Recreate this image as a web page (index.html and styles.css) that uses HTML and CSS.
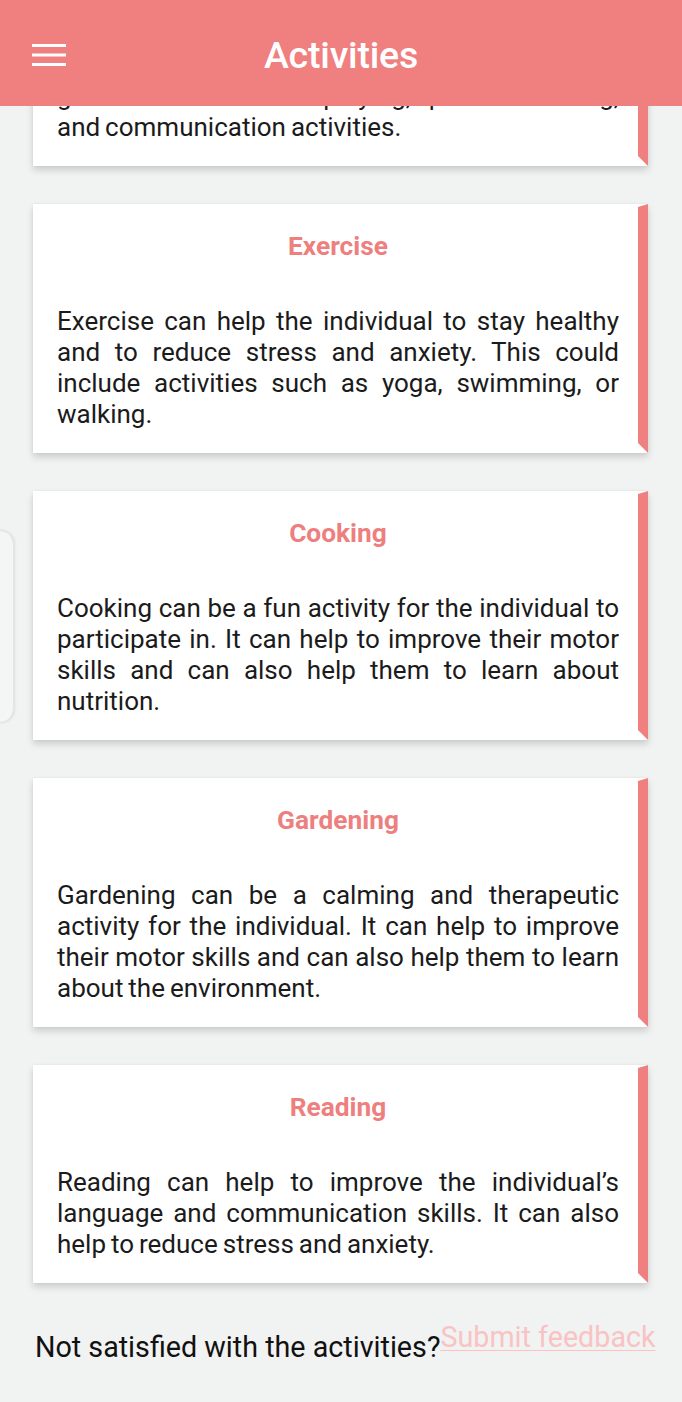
FILE: index.html
```html
<!DOCTYPE html>
<html lang="en">
<head>
<meta charset="utf-8">
<title>Activities</title>
<link rel="stylesheet" href="styles.css">
</head>
<body>
<div class="app">
  <header class="topbar">
    <button class="menu" aria-label="Menu">
      <svg width="34" height="22" viewBox="0 0 34 22"><rect x="0" y="0" width="34" height="3" fill="#fff"/><rect x="0" y="9.5" width="34" height="3" fill="#fff"/><rect x="0" y="19" width="34" height="3" fill="#fff"/></svg>
    </button>
    <h1 class="title">Activities</h1>
  </header>
  <main class="scroll">
    <div class="first-wrap">
      <section class="card">
        <h2 class="card-title">Social Skills</h2>
        <p class="card-text">Social activities can help the individual to build friendships and confidence. This could include<br>games such as <span class="nb">role-playing,</span> <span class="nb">problem-solving,</span> <span class="nb">and communication</span> activities.</p>
      </section>
    </div>
    <section class="card">
      <h2 class="card-title">Exercise</h2>
      <p class="card-text">Exercise can help the individual to stay healthy and to reduce stress and anxiety. This could include activities such as yoga, swimming, or walking.</p>
    </section>
    <section class="card">
      <h2 class="card-title">Cooking</h2>
      <p class="card-text">Cooking can be a fun activity for the individual to participate in. It can help to improve their motor skills and can also help them to learn about nutrition.</p>
    </section>
    <section class="card">
      <h2 class="card-title">Gardening</h2>
      <p class="card-text">Gardening can be a calming and therapeutic activity for the individual. It can help to improve their motor skills and can also help them to learn about the environment.</p>
    </section>
    <section class="card">
      <h2 class="card-title">Reading</h2>
      <p class="card-text">Reading can help to improve the individual’s language and communication skills. It can also help to reduce stress and anxiety.</p>
    </section>
    <div class="feedback">
      <span class="feedback-q">Not satisfied with the activities?</span><a class="feedback-link" href="#">Submit feedback</a>
    </div>
  </main>
  <div class="edge-handle"></div>
</div>
</body>
</html>
```
FILE: styles.css
```css
* { box-sizing: border-box; }
html, body { margin: 0; padding: 0; }
body {
  background: #f1f2f2;
  font-family: Roboto, "Noto Sans", "Liberation Sans", sans-serif;
  color: #1b1b1b;
}
.app {
  position: relative;
  width: 682px;
  height: 1402px;
  display: flex;
  flex-direction: column;
  overflow: hidden;
}
.topbar {
  height: 106px;
  flex: none;
  background: #f07f7f;
  display: flex;
  align-items: center;
  position: relative;
  padding-top: 4px;
}
.menu {
  background: none;
  border: 0;
  padding: 0;
  margin-left: 32px;
  width: 34px;
  height: 22px;
  display: block;
}
.menu svg { display: block; }
.title {
  margin: 0;
  flex: 1;
  text-align: center;
  color: #fff;
  font-weight: 500;
  font-size: 37.5px;
  line-height: 44px;
  padding-right: 66px;
  letter-spacing: -0.2px;
}
.scroll {
  flex: 1;
  overflow: hidden;
  display: flex;
  flex-direction: column;
  gap: 38px;
  padding: 0 34px 0 33px;
}
.first-wrap {
  height: 60px;
  flex: none;
  display: flex;
  flex-direction: column;
  justify-content: flex-end;
}
.card {
  flex: none;
  background: #fff;
  border-right: 10px solid #f07f7f;
  border-top: 3px solid #fff;
  border-bottom: 10px solid #fff;
  box-shadow: 0 4px 7px rgba(0, 0, 0, 0.16), 0 0 2px rgba(0, 0, 0, 0.06);
  padding: 24px 19px 13px 24px;
}
.card-title {
  margin: 0;
  text-align: center;
  color: #ee7f7f;
  font-size: 26.3px;
  line-height: 31px;
  font-weight: 700;
}
.card-text {
  margin: 44px 0 0 0;
  font-size: 26px;
  line-height: 31px;
  word-spacing: -1.5px;
  text-align: justify;
  color: #1b1b1b;
}
.nb { white-space: nowrap; }
.feedback {
  margin-top: -1px;
  display: flex;
  align-items: flex-end;
  padding-left: 2px;
  white-space: nowrap;
}
.feedback-q {
  font-size: 28.7px;
  line-height: 34px;
  color: #111;
}
.feedback-link {
  font-size: 28.7px;
  line-height: 34px;
  color: #f9c3c3;
  text-decoration: underline;
  text-decoration-thickness: 1px;
  text-underline-offset: 3px;
  margin-bottom: 10px;
}
.edge-handle {
  position: absolute;
  left: -14px;
  top: 530px;
  width: 28px;
  height: 193px;
  border-radius: 14px;
  background: #f4f5f5;
  border: 1px solid #e2e3e3;
  box-shadow: 1px 0 3px rgba(0, 0, 0, 0.08);
}
```
